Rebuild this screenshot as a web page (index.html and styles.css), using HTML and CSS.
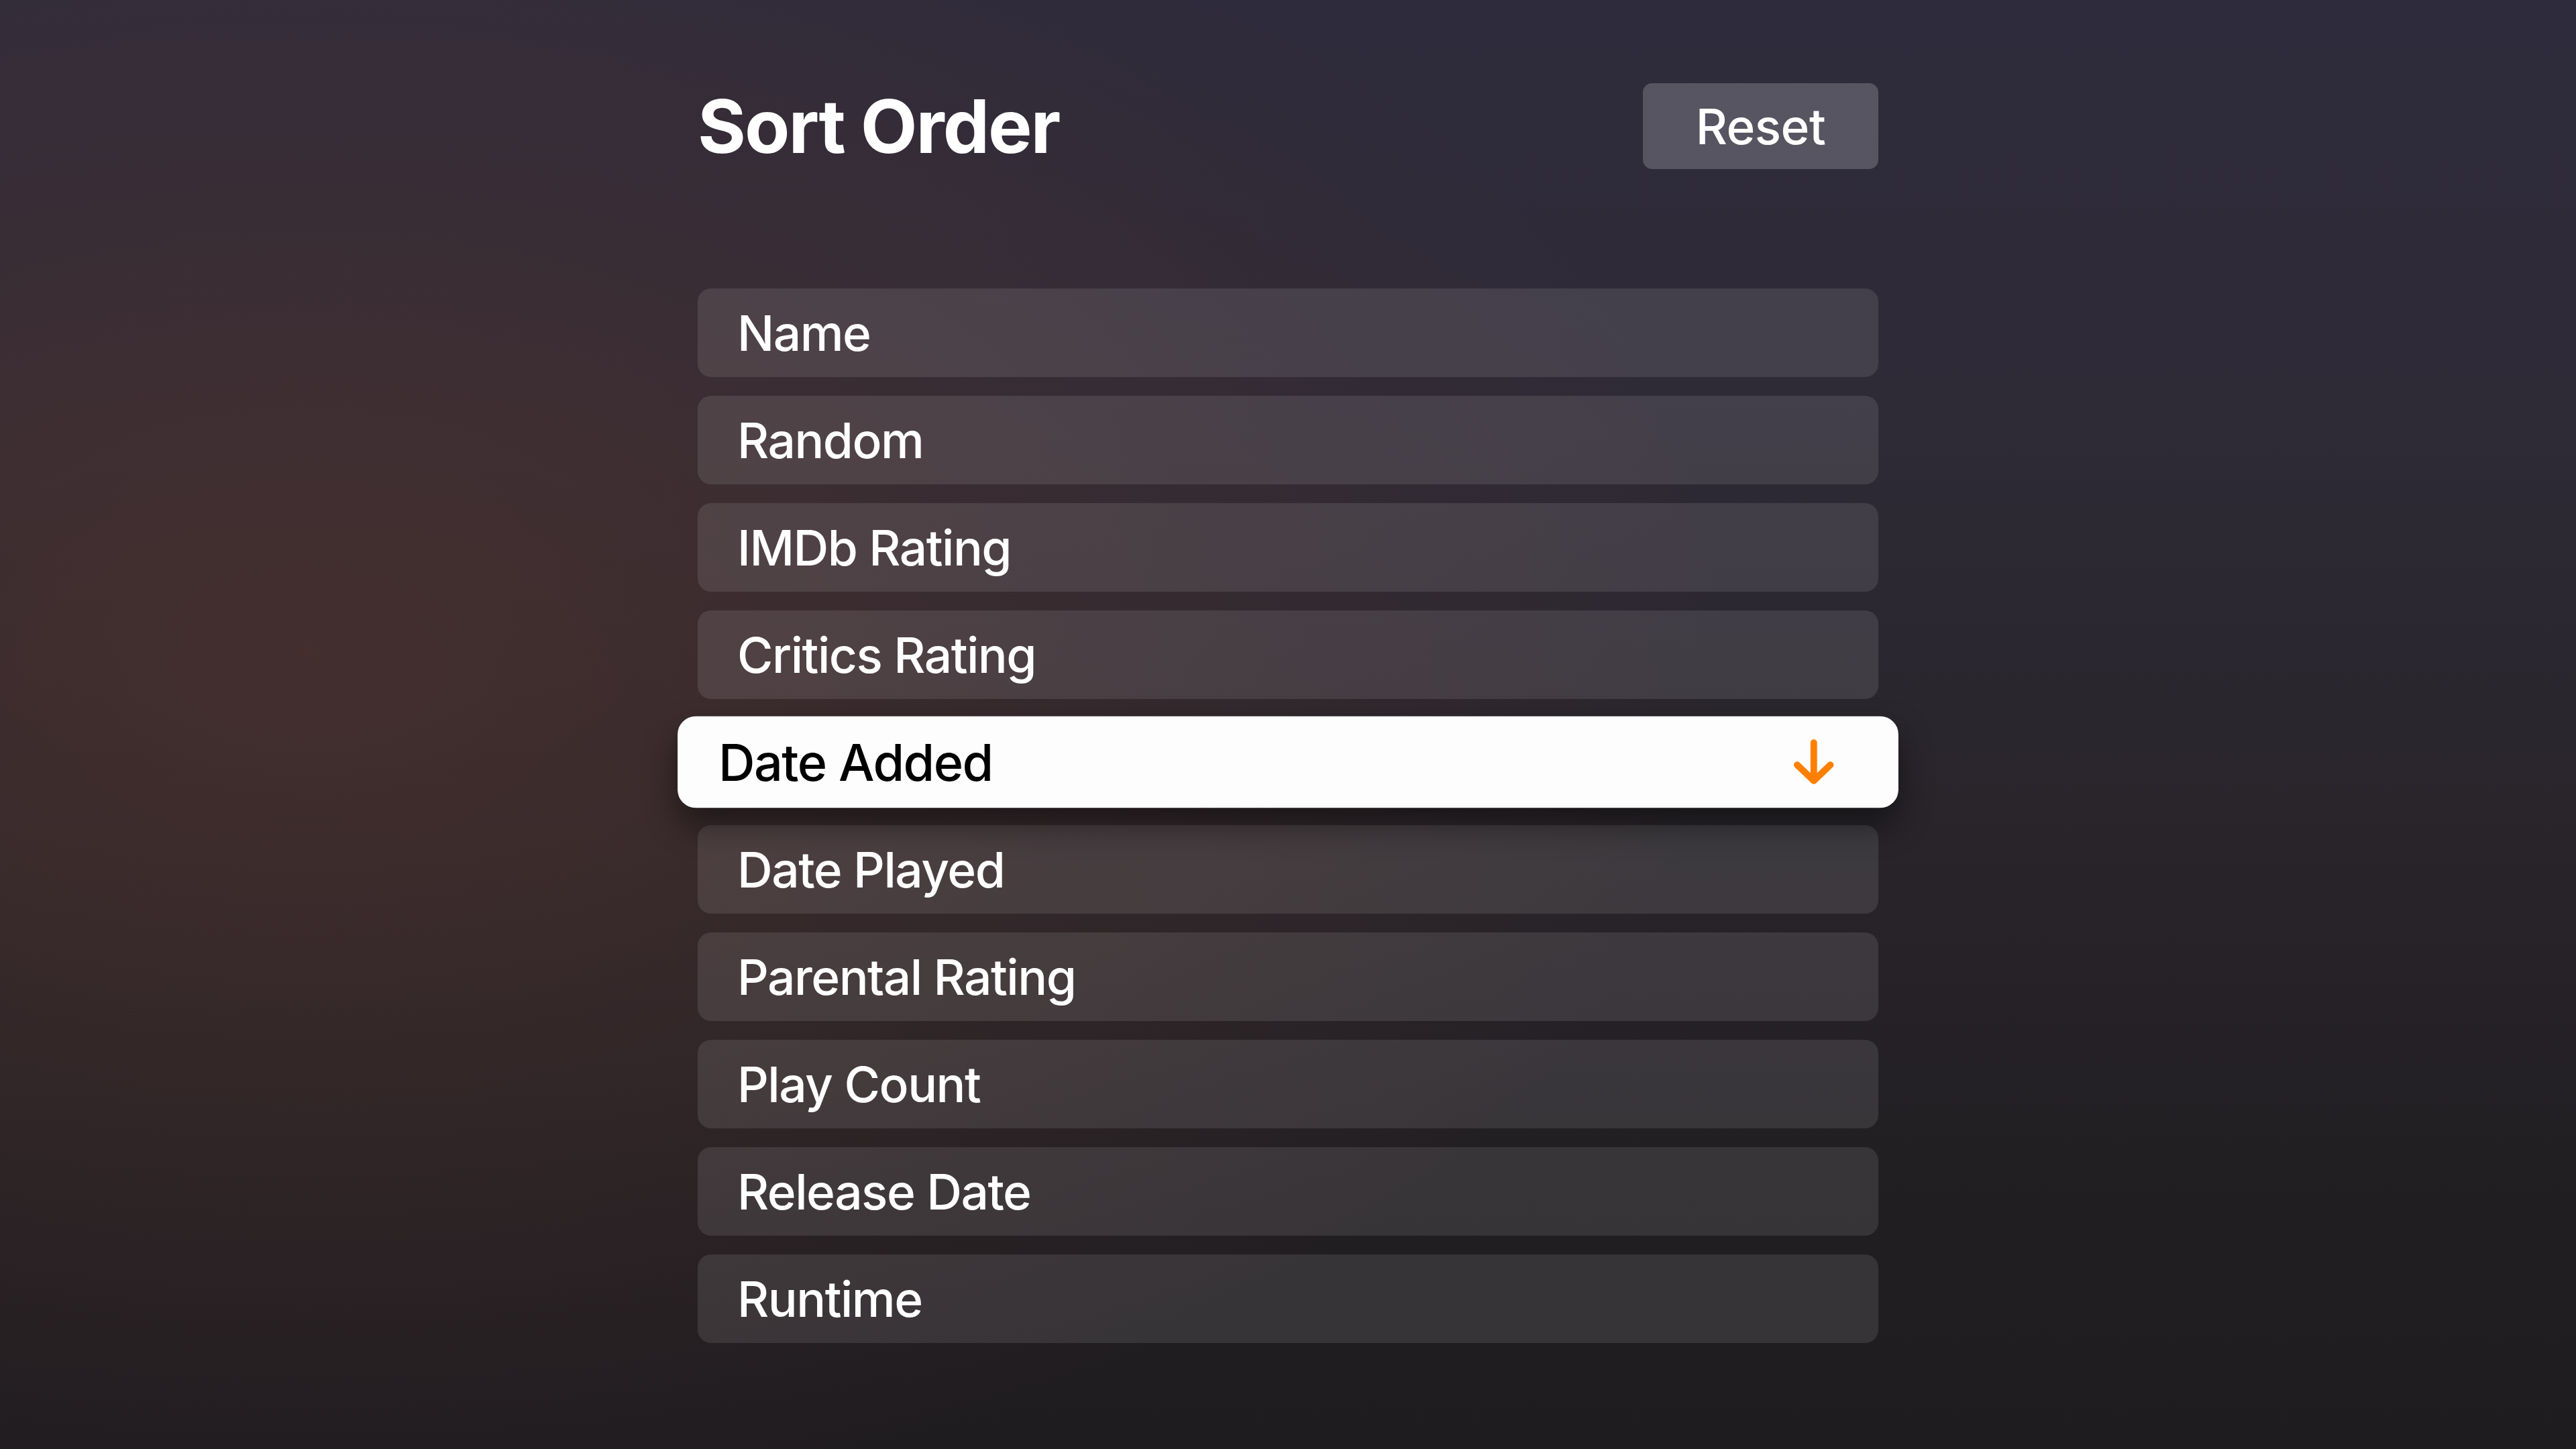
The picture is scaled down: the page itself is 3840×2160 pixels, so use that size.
FILE: index.html
```html
<!DOCTYPE html>
<html lang="en">
<head>
<meta charset="utf-8">
<title>Sort Order</title>
<link rel="stylesheet" href="styles.css">
</head>
<body>
<main class="screen">
  <section class="panel">
    <header class="panel-header">
      <h1 class="title">Sort Order</h1>
      <button class="reset">Reset</button>
    </header>
    <ul class="options">
      <li class="option">Name</li>
      <li class="option">Random</li>
      <li class="option">IMDb Rating</li>
      <li class="option">Critics Rating</li>
      <li class="option option-selected">
        <span>Date Added</span>
        <svg class="arrow" viewBox="0 0 60 66" width="60" height="66" aria-hidden="true">
          <path d="M30 5 V60 M6 37 L30 60 L54 37" fill="none" stroke="#ff7f00" stroke-width="9.5" stroke-linecap="round" stroke-linejoin="round"/>
        </svg>
      </li>
      <li class="option">Date Played</li>
      <li class="option">Parental Rating</li>
      <li class="option">Play Count</li>
      <li class="option">Release Date</li>
      <li class="option">Runtime</li>
    </ul>
  </section>
</main>
</body>
</html>
```

FILE: styles.css
```css
html, body {
  margin: 0;
  padding: 0;
  height: 100%;
}

body {
  font-family: Inter, "Noto Sans", "Liberation Sans", sans-serif;
  color: #ffffff;
  background:
    radial-gradient(ellipse 55% 60% at 12% 45%, rgba(78, 50, 46, 0.7), rgba(78, 50, 46, 0) 100%),
    linear-gradient(180deg, #2e2b3c 0%, #2e2a36 30%, #29252b 55%, #221f23 80%, #1f1c20 100%);
  overflow: hidden;
}

.screen {
  width: 3840px;
  height: 2160px;
  display: flex;
  justify-content: center;
}

.panel {
  width: 1760px;
  padding-top: 124px;
  display: flex;
  flex-direction: column;
}

.panel-header {
  display: flex;
  align-items: center;
  justify-content: space-between;
  height: 128px;
}

.title {
  margin: 0;
  font-size: 110px;
  font-weight: 700;
  letter-spacing: -2px;
  line-height: 1;
  padding-left: 0;
}

.reset {
  width: 351px;
  height: 128px;
  border: none;
  border-radius: 14px;
  background: rgba(255, 255, 255, 0.2);
  color: #ffffff;
  font-family: inherit;
  font-size: 73px;
  font-weight: 500;
  letter-spacing: -0.5px;
  padding: 0;
}

.options {
  list-style: none;
  margin: 178px 0 0;
  padding: 0;
  display: flex;
  flex-direction: column;
  gap: 28px;
}

.option {
  height: 132px;
  box-sizing: border-box;
  padding: 0 92px 0 59px;
  display: flex;
  align-items: center;
  justify-content: space-between;
  border-radius: 20px;
  background: rgba(255, 255, 255, 0.1);
  font-size: 73px;
  font-weight: 500;
  letter-spacing: -1.5px;
}

.option-selected {
  background: #fdfdfd;
  color: #000000;
  border-radius: 26px;
  transform: scale(1.034);
  box-shadow: 0 24px 48px rgba(0, 0, 0, 0.45);
  position: relative;
  z-index: 1;
}

.arrow {
  display: block;
}
```
